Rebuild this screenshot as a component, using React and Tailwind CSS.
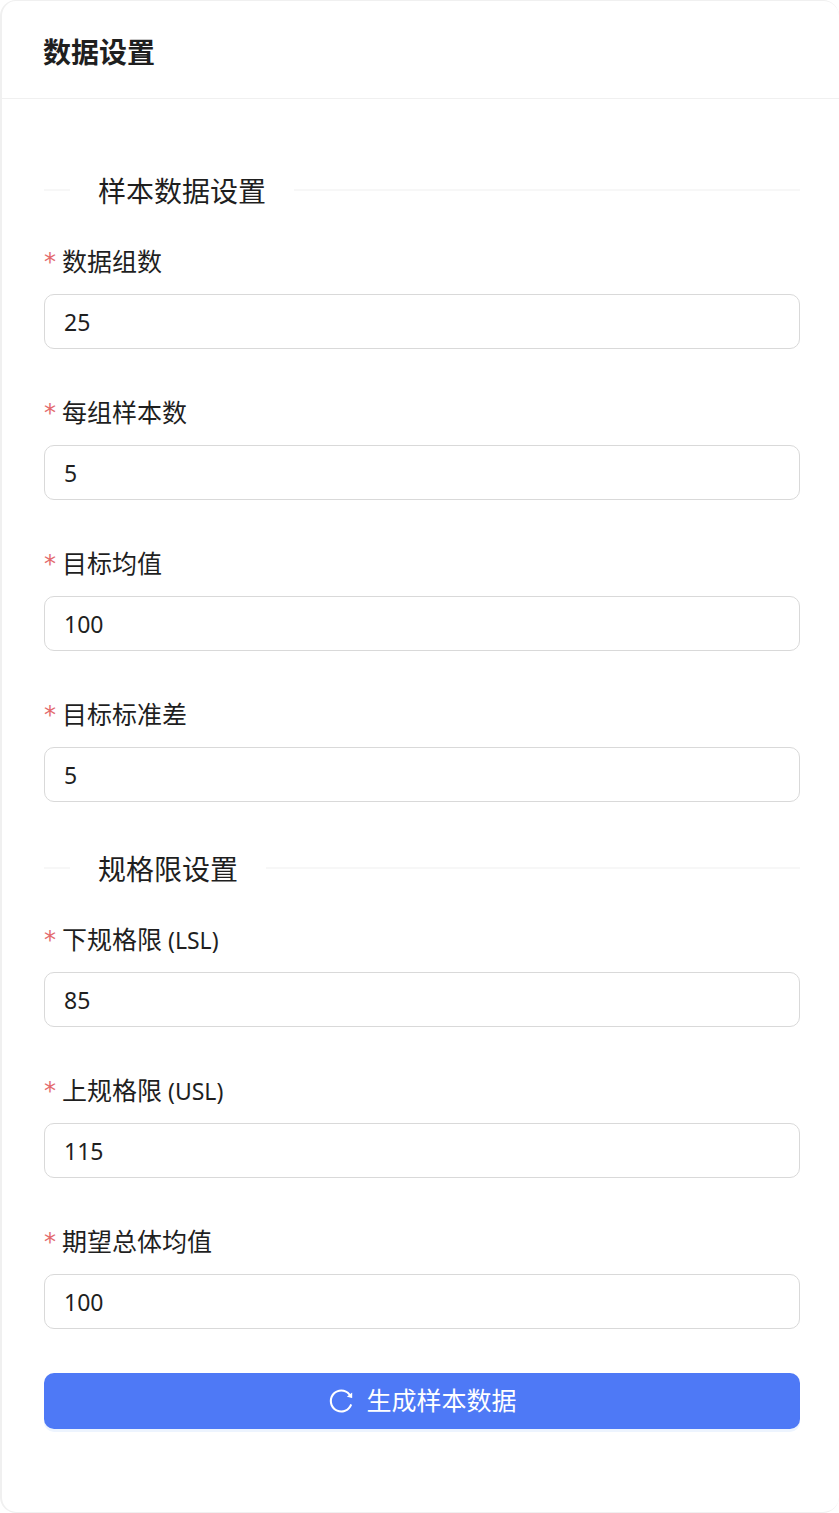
import React from "react";

const sampleFields = [
  { id: "groups", label: "数据组数", value: "25" },
  { id: "size", label: "每组样本数", value: "5" },
  { id: "mean", label: "目标均值", value: "100" },
  { id: "std", label: "目标标准差", value: "5" },
];

const limitFields = [
  { id: "lsl", label: "下规格限", abbr: "(LSL)", value: "85" },
  { id: "usl", label: "上规格限", abbr: "(USL)", value: "115" },
  { id: "expected", label: "期望总体均值", value: "100" },
];

function SectionTitle({ children }) {
  return (
    <div className="flex items-center gap-7">
      <span className="h-0.5 w-[26px] bg-[#f7f7f7]" />
      <h3 className="pt-0.5 text-[28px] leading-[42px]">{children}</h3>
      <span className="h-0.5 flex-1 bg-[#f7f7f7]" />
    </div>
  );
}

function Field({ id, label, abbr, value }) {
  return (
    <div className="flex flex-col gap-[13px]">
      <label htmlFor={id} className="flex items-center gap-[6px] text-[25px] leading-10">
        <span className="w-3 pt-0.5 font-['DejaVu_Sans',sans-serif] text-[24px] leading-6 text-[#e36a6c]">*</span>
        <span>
          {label}
          {abbr && <span className="text-[23px] leading-none"> {abbr}</span>}
        </span>
      </label>
      <input
        id={id}
        type="text"
        inputMode="numeric"
        required
        defaultValue={value}
        className="h-[55px] w-full rounded-[10px] border border-[#d9d9d9] bg-white px-[19px] text-[23px] outline-none focus:border-[#4e79f6]"
      />
    </div>
  );
}

function Section({ title, fields }) {
  return (
    <section className="flex flex-col gap-[29px]">
      <SectionTitle>{title}</SectionTitle>
      <div className="flex flex-col gap-[43px]">
        {fields.map((field) => (
          <Field key={field.id} {...field} />
        ))}
      </div>
    </section>
  );
}

export default function App() {
  return (
    <main className="rounded-[16px] border-y border-l-2 border-[#f0f0f0] bg-white font-['Noto_Sans','Noto_Sans_CJK_SC',sans-serif] text-[#1f1f1f]">
      <header className="flex h-[98px] items-center border-b border-[#f0f0f0] px-[41px] pt-1">
        <h2 className="text-[28px] leading-10 font-bold">数据设置</h2>
      </header>
      <form className="flex flex-col gap-11 pt-[69px] pr-[39px] pb-[83px] pl-[42px]" onSubmit={(e) => e.preventDefault()}>
        <Section title="样本数据设置" fields={sampleFields} />
        <Section title="规格限设置" fields={limitFields} />
        <button
          type="submit"
          className="flex h-14 w-full items-center justify-center gap-[11px] rounded-[10px] bg-[#4e79f6] text-[25px] text-white shadow-[0_3px_0_#edf4fe]"
        >
          <svg aria-hidden="true" viewBox="0 0 1024 1024" className="size-7" fill="currentColor">
            <path d="M909.1 209.3l-56.4 44.1C775.8 155.1 656.2 92 521.9 92 290 92 102.3 279.5 102 511.5 101.7 743.7 289.8 932 521.9 932c181.3 0 335.8-115 394.6-276.1 1.5-4.2-.7-8.9-4.9-10.3l-56.7-19.5a8 8 0 0 0-10.1 4.8c-1.8 5-3.8 10-5.9 14.9-17.3 41-42.1 77.8-73.7 109.4A344.77 344.77 0 0 1 655.9 829c-42.3 17.9-87.4 27-133.8 27-46.5 0-91.5-9.1-133.8-27A341.5 341.5 0 0 1 279 755.2a342.16 342.16 0 0 1-73.7-109.4c-17.9-42.4-27-87.4-27-133.9s9.1-91.5 27-133.9c17.3-41 42.1-77.8 73.7-109.4 31.6-31.6 68.4-56.4 109.3-73.8 42.3-17.9 87.4-27 133.8-27 46.5 0 91.5 9.1 133.8 27a341.5 341.5 0 0 1 109.3 73.8c9.9 9.9 19.2 20.4 27.8 31.4l-60.2 47a8 8 0 0 0 3 14.1l175.6 43c5 1.2 9.9-2.6 9.9-7.7l.8-180.9c-.1-6.6-7.8-10.3-13-6.2z" />
          </svg>
          生成样本数据
        </button>
      </form>
    </main>
  );
}
